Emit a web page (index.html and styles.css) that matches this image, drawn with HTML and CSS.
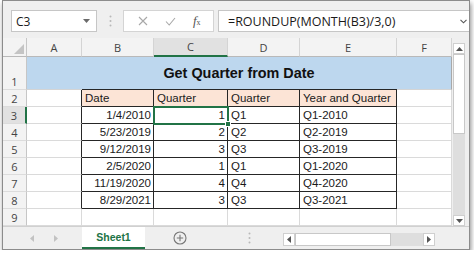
FILE: index.html
```html
<!DOCTYPE html>
<html lang="en">
<head>
    <meta charset="UTF-8">
    <title>Get Quarter from Date</title>
    <link rel="stylesheet" href="styles.css">
</head>
<body>
<div class="window">
    <div class="formula-bar">
        <div class="name-box">
            <span>C3</span>
            <svg class="caret" width="7" height="4" viewBox="0 0 7 4"><path d="M0 0h7L3.5 4z" fill="#6a6a6a"/></svg>
        </div>
        <div class="grip">
            <svg width="3" height="12" viewBox="0 0 3 12"><circle cx="1.5" cy="1.5" r="1" fill="#b8b8b8"/><circle cx="1.5" cy="6" r="1" fill="#b8b8b8"/><circle cx="1.5" cy="10.5" r="1" fill="#b8b8b8"/></svg>
        </div>
        <div class="fx-box">
            <svg width="10" height="10" viewBox="0 0 10 10"><path d="M1 1l8 8M9 1L1 9" stroke="#a8a8a8" stroke-width="1.1"/></svg>
            <svg width="11" height="9" viewBox="0 0 11 9"><path d="M1 4.5l3.2 3.5L10 1" stroke="#a8a8a8" stroke-width="1.1" fill="none"/></svg>
            <span class="fx"><i>f</i><small>x</small></span>
        </div>
        <div class="formula">
            <span>=ROUNDUP(MONTH(B3)/3,0)</span>
            <svg width="7" height="5" viewBox="0 0 7 5"><path d="M0.5 0.8L3.5 3.8L6.5 0.8" stroke="#555" stroke-width="1.1" fill="none"/></svg>
        </div>
    </div>

    <div class="sheet-area">
        <div class="grid">
            <div class="corner"><svg width="10" height="10" viewBox="0 0 10 10"><path d="M10 0V10H0z" fill="#c4c4c4"/></svg></div>
            <div class="col-h">A</div>
            <div class="col-h">B</div>
            <div class="col-h active">C</div>
            <div class="col-h">D</div>
            <div class="col-h">E</div>
            <div class="col-h">F</div>

            <div class="row-h">1</div>
            <div class="title">Get Quarter from Date</div>

            <div class="row-h">2</div>
            <div class="cell tl"></div>
            <div class="cell t th">Date</div>
            <div class="cell t th">Quarter</div>
            <div class="cell t th">Quarter</div>
            <div class="cell t th">Year and Quarter</div>
            <div class="cell"></div>

            <div class="row-h active">3</div>
            <div class="cell tl"></div>
            <div class="cell t num">1/4/2010</div>
            <div class="cell t num sel">1</div>
            <div class="cell t">Q1</div>
            <div class="cell t">Q1-2010</div>
            <div class="cell"></div>

            <div class="row-h">4</div>
            <div class="cell tl"></div>
            <div class="cell t num">5/23/2019</div>
            <div class="cell t num">2</div>
            <div class="cell t">Q2</div>
            <div class="cell t">Q2-2019</div>
            <div class="cell"></div>

            <div class="row-h">5</div>
            <div class="cell tl"></div>
            <div class="cell t num">9/12/2019</div>
            <div class="cell t num">3</div>
            <div class="cell t">Q3</div>
            <div class="cell t">Q3-2019</div>
            <div class="cell"></div>

            <div class="row-h">6</div>
            <div class="cell tl"></div>
            <div class="cell t num">2/5/2020</div>
            <div class="cell t num">1</div>
            <div class="cell t">Q1</div>
            <div class="cell t">Q1-2020</div>
            <div class="cell"></div>

            <div class="row-h">7</div>
            <div class="cell tl"></div>
            <div class="cell t num">11/19/2020</div>
            <div class="cell t num">4</div>
            <div class="cell t">Q4</div>
            <div class="cell t">Q4-2020</div>
            <div class="cell"></div>

            <div class="row-h">8</div>
            <div class="cell tl"></div>
            <div class="cell t num">8/29/2021</div>
            <div class="cell t num">3</div>
            <div class="cell t">Q3</div>
            <div class="cell t">Q3-2021</div>
            <div class="cell"></div>

            <div class="row-h">9</div>
            <div class="cell"></div>
            <div class="cell"></div>
            <div class="cell"></div>
            <div class="cell"></div>
            <div class="cell"></div>
            <div class="cell"></div>
        </div>

        <div class="vscroll">
            <div class="sb-btn"><svg width="7" height="4" viewBox="0 0 7 4"><path d="M0 4h7L3.5 0z" fill="#555"/></svg></div>
            <div class="sb-thumb v"></div>
            <div class="sb-track"></div>
            <div class="sb-btn"><svg width="7" height="4" viewBox="0 0 7 4"><path d="M0 0h7L3.5 4z" fill="#555"/></svg></div>
        </div>
    </div>

    <div class="tab-bar">
        <div class="tab-nav">
            <svg width="4" height="7" viewBox="0 0 4 7"><path d="M4 0v7L0 3.5z" fill="#c2c2c2"/></svg>
            <svg width="4" height="7" viewBox="0 0 4 7"><path d="M0 0v7L4 3.5z" fill="#c2c2c2"/></svg>
        </div>
        <div class="tab">Sheet1</div>
        <div class="add-sheet">
            <svg width="14" height="14" viewBox="0 0 14 14"><circle cx="7" cy="7" r="6" stroke="#777" stroke-width="1.1" fill="none"/><path d="M7 3.8v6.4M3.8 7h6.4" stroke="#777" stroke-width="1.1"/></svg>
        </div>
        <div class="grip tab-grip">
            <svg width="3" height="12" viewBox="0 0 3 12"><circle cx="1.5" cy="1.5" r="1" fill="#b8b8b8"/><circle cx="1.5" cy="6" r="1" fill="#b8b8b8"/><circle cx="1.5" cy="10.5" r="1" fill="#b8b8b8"/></svg>
        </div>
        <div class="hscroll">
            <div class="sb-btn"><svg width="4" height="7" viewBox="0 0 4 7"><path d="M4 0v7L0 3.5z" fill="#555"/></svg></div>
            <div class="sb-thumb h"></div>
            <div class="sb-track"></div>
            <div class="sb-btn"><svg width="4" height="7" viewBox="0 0 4 7"><path d="M0 0v7L4 3.5z" fill="#555"/></svg></div>
        </div>
    </div>
</div>
</body>
</html>
```

FILE: styles.css
```css
body {
    margin: 0;
    background: #fff;
    font-family: "Liberation Sans", Arial, sans-serif;
    color: #1a1a1a;
}
.window {
    width: 466px;
    margin-left: 2px;
    border: 1px solid #8c8c8c;
    background: #efefef;
    box-shadow: 1px 3px 5px rgba(0, 0, 0, 0.45);
}

/* formula bar */
.formula-bar {
    height: 37px;
    box-sizing: border-box;
    display: flex;
    padding: 9px 0 6px 8px;
}
.name-box {
    width: 86px;
    box-sizing: border-box;
    display: flex;
    align-items: center;
    justify-content: space-between;
    padding: 0 6px 0 4px;
    background: #fff;
    border: 1px solid #c6c6c6;
    font-family: "Open Sans", sans-serif;
    font-size: 12px;
}
.grip {
    width: 26px;
    display: flex;
    align-items: center;
    justify-content: center;
}
.fx-box {
    width: 91px;
    box-sizing: border-box;
    display: flex;
    align-items: center;
    justify-content: space-around;
    padding: 0 4px 0 6px;
    background: #fff;
    border: 1px solid #d4d4d4;
}
.fx {
    font-family: "Liberation Serif", serif;
    font-size: 13px;
    color: #555;
}
.fx small {
    font-size: 8px;
}
.formula {
    flex: 1;
    margin-left: 4px;
    display: flex;
    align-items: center;
    justify-content: space-between;
    padding: 0 2px 0 9px;
    background: #fff;
    border: 1px solid #c6c6c6;
    border-right: none;
    font-family: "Open Sans", sans-serif;
    font-size: 12.5px;
}

/* sheet grid */
.sheet-area {
    display: flex;
    background: #fff;
}
.grid {
    display: grid;
    grid-template-columns: 24px 55px 72px 74px 72px 97px 55px;
    grid-template-rows: 19px 33px repeat(8, 17px);
}
.grid > div {
    box-sizing: border-box;
}
.corner {
    display: flex;
    align-items: flex-end;
    justify-content: flex-end;
    padding: 0 2px 2px 0;
    background: #f3f3f3;
    border-right: 1px solid #c6c6c6;
    border-bottom: 1px solid #b9b9b9;
}
.col-h,
.row-h {
    display: flex;
    justify-content: center;
    background: #f3f3f3;
    color: #444;
    font-family: "Open Sans", sans-serif;
    font-size: 11px;
}
.col-h {
    align-items: center;
    border-right: 1px solid #d4d4d4;
    border-bottom: 1px solid #b9b9b9;
}
.row-h {
    align-items: flex-end;
    line-height: 15px;
    border-right: 1px solid #c6c6c6;
    border-bottom: 1px solid #dcdcdc;
}
.col-h.active {
    background: #e1e1e1;
    border-bottom: 2px solid #217346;
}
.row-h.active {
    background: #e1e1e1;
    border-right: 2px solid #217346;
}
.title {
    grid-column: span 6;
    display: flex;
    align-items: center;
    justify-content: center;
    background: #bdd7ee;
    border-right: 1px solid #a9a9a9;
    border-bottom: 1px solid #d4d4d4;
    font-size: 14.4px;
    font-weight: bold;
    color: #111;
}
.cell {
    display: flex;
    align-items: flex-end;
    padding: 0 2px 1px 3px;
    line-height: 14px;
    font-size: 11.5px;
    border-right: 1px solid #dadada;
    border-bottom: 1px solid #dadada;
}
.cell.tl {
    border-right-color: #262626;
}
.cell.t {
    border-right-color: #262626;
    border-bottom-color: #262626;
}
.cell.th {
    background: #fce4d6;
    box-shadow: 0 -1px 0 #262626;
}
.cell.num {
    justify-content: flex-end;
}
.cell.sel {
    position: relative;
    outline: 2px solid #217346;
    outline-offset: -1px;
}
.cell.sel::after {
    content: "";
    position: absolute;
    right: -4px;
    bottom: -4px;
    width: 4px;
    height: 4px;
    background: #217346;
    border: 1px solid #fff;
}

/* scroll bars */
.vscroll {
    width: 17px;
    box-sizing: border-box;
    display: flex;
    flex-direction: column;
    padding: 5px 4px 0 1px;
    background: #efefef;
}
.sb-btn {
    display: flex;
    align-items: center;
    justify-content: center;
    background: #fff;
    border: 1px solid #cfcfcf;
    box-sizing: border-box;
}
.vscroll .sb-btn {
    height: 11px;
}
.sb-thumb {
    background: #fff;
    border: 1px solid #c8c8c8;
    box-sizing: border-box;
}
.sb-thumb.v {
    height: 80px;
}
.sb-track {
    flex: 1;
    background: #dedede;
}

/* sheet tabs */
.tab-bar {
    height: 23px;
    display: flex;
    border-top: 1px solid #d0d0d0;
    box-sizing: border-box;
}
.tab-nav {
    width: 79px;
    display: flex;
    align-items: center;
    gap: 20px;
    padding-left: 27px;
    box-sizing: border-box;
}
.tab {
    width: 63px;
    box-sizing: border-box;
    display: flex;
    align-items: center;
    justify-content: center;
    background: #fff;
    border-bottom: 2px solid #217346;
    color: #217346;
    font-size: 10.5px;
    font-weight: bold;
}
.add-sheet {
    width: 70px;
    display: flex;
    align-items: center;
    justify-content: center;
}
.tab-grip {
    width: 68px;
}
.hscroll {
    width: 152px;
    display: flex;
    margin: 6px 0 3px;
}
.hscroll .sb-btn {
    width: 12px;
}
.sb-thumb.h {
    width: 96px;
}
```
